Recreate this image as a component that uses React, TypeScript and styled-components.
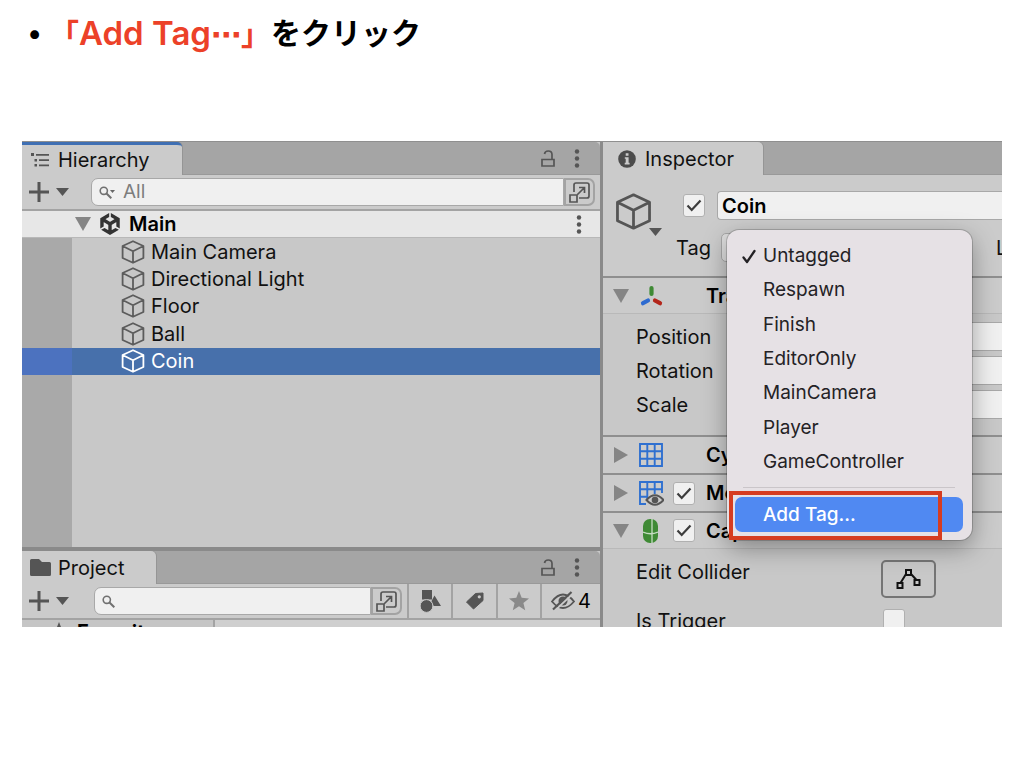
import React from "react";
import styled, { createGlobalStyle } from "styled-components";
import { SiUnity } from "react-icons/si";

const GlobalStyle = createGlobalStyle`
  *, *::before, *::after { box-sizing: border-box; }
  body {
    margin: 0;
    background: #fff;
    color: #111;
    font-family: Inter, "Noto Sans CJK JP", sans-serif;
    font-size: 20px;
    line-height: 24px;
  }
  button, input, select { font: inherit; color: inherit; margin: 0; padding: 0; }
  button { background: none; border: 0; display: flex; align-items: center; justify-content: center; }
  ul { list-style: none; margin: 0; padding: 0; }
  h1, h2, h3 { margin: 0; font: inherit; }
  svg { display: block; flex: none; }
`;

const Slide = styled.main`
  display: flex;
  flex-direction: column;
  gap: 84px;
  padding: 9px 22px 40px;
`;

const Heading = styled.h1`
  && {
    display: flex;
    align-items: center;
    height: 48px;
    padding-left: 6px;
    font-size: 30px;
    line-height: 48px;
    font-weight: 700;
    color: #000;
    white-space: nowrap;
  }
`;

const Bullet = styled.span`
  width: 21px;
  font-size: 28px;
`;

const Accent = styled.span`
  color: #ec4128;
  font-family: "Noto Sans CJK JP", sans-serif;
`;

const Latin = styled.span`
  font-family: Inter, sans-serif;
  font-size: 33px;
  font-weight: 600;
`;

const Dots = styled.span`
  font-family: "DejaVu Sans", sans-serif;
`;

const Editor = styled.section`
  display: grid;
  grid-template-columns: 578fr 399fr;
  gap: 3px;
  height: 486px;
  overflow: hidden;
  background: #8a8a8a;
  border-top: 1px solid #8f8f8f;
`;

const Column = styled.div`
  display: flex;
  flex-direction: column;
  gap: 4px;
  min-width: 0;
`;

const Panel = styled.section<{ $grow?: boolean }>`
  display: flex;
  flex-direction: column;
  flex: ${(p) => (p.$grow ? "1 1 0" : "none")};
  min-width: 0;
  min-height: 0;
  background: #c8c8c8;
`;

const TabBar = styled.header<{ $square?: boolean }>`
  display: flex;
  flex: none;
  height: 33px;
  background: #a5a5a5;
  border-radius: ${(p) => (p.$square ? "0" : "0 5px 0 0")};
  box-shadow: inset 0 -1px #999;
`;

const Tab = styled.button<{ $width: number; $indent?: number; $focused?: boolean }>`
  && {
    justify-content: flex-start;
    gap: 8px;
    width: ${(p) => p.$width}px;
    padding-left: ${(p) => p.$indent ?? 8}px;
    background: #cbcbcb;
    border-top: ${(p) => (p.$focused ? "3px solid #3f6fb3" : "0")};
    border-radius: 0 5px 0 0;
    box-shadow: 1px 0 #959595;
  }
`;

const TabIcon = styled.span`
  display: flex;
  justify-content: center;
  width: 20px;
`;

const TabTools = styled.div`
  display: flex;
  align-items: center;
  gap: 19px;
  margin-left: auto;
  padding-right: 20px;
`;

const Toolbar = styled.div`
  display: flex;
  flex: none;
  align-items: center;
  height: 36px;
  background: #cbcbcb;
  border-bottom: 2px solid #a3a3a3;
`;

const AddButton = styled.button`
  && {
    gap: 7px;
    width: 54px;
  }
`;

const Search = styled.label<{ $indent: number }>`
  display: flex;
  flex: 1;
  align-items: center;
  gap: 6px;
  min-width: 0;
  height: 28px;
  margin-left: ${(p) => p.$indent}px;
  padding-left: 7px;
  background: #f0f0f0;
  border: 1px solid #a8a8a8;
  border-radius: 7px 0 0 7px;
`;

const SearchInput = styled.input`
  && {
    flex: 1;
    min-width: 0;
    width: 0;
    border: 0;
    background: none;
    font-size: 19px;
  }
  &::placeholder { color: #7d7d7d; opacity: 1; }
`;

const ExpandButton = styled.button`
  && {
    width: 31px;
    height: 28px;
    margin-right: 5px;
    border: 2px solid #a3a3a3;
    border-radius: 0 7px 7px 0;
  }
`;

const ToolButton = styled.button<{ $width: number }>`
  && {
    gap: 3px;
    width: ${(p) => p.$width}px;
    height: 34px;
    border-left: 2px solid #a3a3a3;
    color: #000;
  }
`;

const SceneRow = styled.div`
  display: flex;
  flex: none;
  align-items: center;
  gap: 8px;
  height: 27px;
  padding: 0 18px 0 53px;
  background: #e7e7e7;
  border-bottom: 1px solid #b8b8b8;
  font-weight: 600;
  color: #000;
`;

const Spacer = styled.span`
  flex: 1;
`;

const TreeArea = styled.div`
  flex: 1;
  background: linear-gradient(to right, #a9a9a9 50px, transparent 50px);
`;

const Tree = styled.ul`
  display: grid;
  grid-auto-rows: 1fr;
  height: 137px;
`;

const TreeItem = styled.li<{ $selected?: boolean }>`
  display: flex;
  align-items: center;
  gap: 6px;
  padding-left: 99px;
  color: ${(p) => (p.$selected ? "#fff" : "#111")};
  background: ${(p) => (p.$selected ? "linear-gradient(to right, #4c72bf 50px, #4770ab 50px)" : "none")};
  svg { color: ${(p) => (p.$selected ? "#fff" : "#5c5c5c")}; }
`;

const Assets = styled.div`
  display: grid;
  grid-template-columns: 193px 1fr;
  height: 7px;
  overflow: hidden;
  background: #cfcfcf;
`;

const Favorites = styled.div`
  display: flex;
  align-items: center;
  gap: 8px;
  height: 24px;
  padding-left: 27px;
  background: #c5c5c5;
  border-right: 2px solid #a3a3a3;
  font-weight: 700;
  color: #000;
`;

const ObjectHeader = styled.div`
  display: flex;
  flex: none;
  height: 103px;
  padding: 16px 0 0 12px;
  background: #cbcbcb;
  border-bottom: 2px solid #8f8f8f;
`;

const ObjectIcon = styled.button`
  && {
    flex: none;
    position: relative;
    align-items: flex-start;
    justify-content: flex-start;
    width: 61px;
    padding-top: 2px;
    color: #555;
  }
  svg + svg { position: absolute; left: 34px; top: 37px; }
`;

const ObjectFields = styled.div`
  display: flex;
  flex: 1;
  flex-direction: column;
  gap: 13px;
  min-width: 0;
`;

const NameRow = styled.div`
  display: flex;
  align-items: center;
  gap: 12px;
  height: 29px;
  padding-left: 7px;
`;

const TickBox = styled.span`
  position: relative;
  display: flex;
  flex: none;
  width: 22px;
  height: 23px;
  input {
    appearance: none;
    width: 100%;
    height: 100%;
    background: #f0f0f0;
    border: 1px solid #b0b0b0;
    border-radius: 3px;
  }
  svg { position: absolute; left: 3px; top: 4px; pointer-events: none; display: none; }
  input:checked + svg { display: block; }
`;

const Field = styled.input<{ $strong?: boolean }>`
  && {
    flex: 1;
    width: 0;
    min-width: 0;
    height: 29px;
    padding-left: 4px;
    background: #f0f0f0;
    border: 1px solid #a8a8a8;
    border-right: 0;
    border-radius: 4px 0 0 4px;
    font-weight: ${(p) => (p.$strong ? 600 : 400)};
    color: #000;
  }
`;

const TagRow = styled.div`
  display: flex;
  align-items: center;
  height: 29px;
  white-space: nowrap;
`;

const TagLabel = styled.label`
  flex: none;
  width: 45px;
`;

const TagField = styled.div`
  position: relative;
  flex: none;
  width: 264px;
  height: 29px;
  margin-right: 11px;
`;

const TagSelect = styled.select`
  && {
    appearance: none;
    width: 240px;
    height: 29px;
    background: #dfdfdf;
    border: 1px solid #a8a8a8;
    border-radius: 5px;
  }
`;

const Menu = styled.div`
  position: absolute;
  z-index: 2;
  left: 6px;
  top: -3px;
  width: 245px;
  padding: 9px 9px 8px 8px;
  background: #e6e1e5;
  border-radius: 12px;
  box-shadow: 0 0 0 1px rgba(0, 0, 0, 0.18), 0 8px 24px rgba(0, 0, 0, 0.35);
`;

const MenuGroup = styled.div`
  display: grid;
  grid-auto-rows: 1fr;
  height: 240px;
`;

const MenuItem = styled.button<{ $active?: boolean }>`
  && {
    justify-content: flex-start;
    width: 100%;
    height: ${(p) => (p.$active ? "35px" : "auto")};
    border-radius: 7px;
    background: ${(p) => (p.$active ? "#5089f2" : "none")};
    color: ${(p) => (p.$active ? "#fff" : "#242225")};
    font-size: 19px;
    font-weight: ${(p) => (p.$active ? 500 : 400)};
  }
`;

const MenuMark = styled.span`
  display: flex;
  width: 28px;
  padding-left: 7px;
`;

const MenuRule = styled.hr`
  height: 1px;
  margin: 8px 8px 9px;
  border: 0;
  background: #cac5c9;
`;

const Callout = styled.span`
  position: absolute;
  left: 2px;
  bottom: 0;
  width: 213px;
  height: 49px;
  border: 4px solid #d63c20;
  pointer-events: none;
`;

const ComponentHeader = styled.header<{ $open?: boolean }>`
  display: flex;
  flex: none;
  align-items: center;
  height: ${(p) => (p.$open ? 36 : 38)}px;
  padding-left: 10px;
  background: #cbcbcb;
  border-bottom: ${(p) => (p.$open ? "1px solid #b9b9b9" : "2px solid #8f8f8f")};
  font-weight: 600;
  color: #000;
  white-space: nowrap;
`;

const Slot = styled.span<{ $width: number }>`
  display: flex;
  flex: none;
  width: ${(p) => p.$width}px;
`;

const Properties = styled.div`
  display: flex;
  flex: none;
  flex-direction: column;
  gap: 5px;
  height: 123px;
  padding: 8px 0 0 33px;
  border-bottom: 2px solid #8f8f8f;
`;

const PropertyRow = styled.label`
  display: flex;
  align-items: center;
  height: 29px;
  > span { width: 130px; }
`;

const ColliderBody = styled.div`
  display: flex;
  flex: none;
  flex-direction: column;
  gap: 11px;
  padding: 11px 0 0 33px;
`;

const ColliderRow = styled.div`
  display: flex;
  align-items: flex-start;
  > label { width: 245px; }
`;

const EditButton = styled.button`
  && {
    width: 55px;
    height: 38px;
    border: 2px solid #757575;
    border-radius: 5px;
  }
`;

const TriggerSlot = styled.span`
  padding-left: 2px;
`;

const Cube = ({ size = 24, weight = 1.8 }: { size?: number; weight?: number }) => (
  <svg width={size} height={size} viewBox="0 0 24 24" fill="none" stroke="currentColor" strokeWidth={weight} strokeLinejoin="round">
    <path d="M12 1.2 22.4 6v12L12 22.8 1.6 18V6zM1.6 6 12 11.2 22.4 6M12 11.2v11.6" />
  </svg>
);

const Triangle = ({ down }: { down?: boolean }) => (
  <svg width="16" height="16" viewBox="0 0 16 16" fill="#858585">
    <path d={down ? "M0 1h16L8 15z" : "M1 0v16l14-8z"} />
  </svg>
);

const SmallArrow = () => (
  <svg width="13" height="8" viewBox="0 0 13 8" fill="#555"><path d="M0 0h13L6.500 8z" /></svg>
);

const Plus = () => (
  <svg width="20" height="20" viewBox="0 0 20 20" stroke="#555" strokeWidth="3"><path d="M10 0v20M0 10h20" /></svg>
);

const Lock = () => (
  <svg width="14" height="18" viewBox="0 0 14 18" fill="none" stroke="#555" strokeWidth="1.7">
    <path d="M1 9.500h12V16H1zM11 9V4.500Q11 1 7.200 1 4 1 3.500 4" />
  </svg>
);

const Kebab = () => (
  <svg width="6" height="19" viewBox="0 0 6 19" fill="#555">
    <circle cx="3" cy="2.500" r="2.200" /><circle cx="3" cy="9.500" r="2.200" /><circle cx="3" cy="16.500" r="2.200" />
  </svg>
);

const Magnifier = ({ arrow }: { arrow?: boolean }) => (
  <svg width={arrow ? 18 : 13} height="13" viewBox={arrow ? "0 0 18 13" : "0 0 13 13"} fill="none" stroke="#707070" strokeWidth="1.600">
    <circle cx="4.800" cy="4.800" r="3.600" /><path d="m7.500 7.500 4.800 4.800" strokeWidth="2" />
    {arrow && <path d="M11 4h5l-2.500 3z" fill="#666" stroke="none" />}
  </svg>
);

const Expand = () => (
  <svg width="21" height="21" viewBox="0 0 21 21" fill="none" stroke="#555" strokeWidth="1.700">
    <path d="M5 10V3q0-2 2-2h11q2 0 2 2v11q0 2-2 2h-8M1 13h7v7H1zM8.500 12.500 15 6M10 5.500h5.500V11" />
  </svg>
);

const ListIcon = () => (
  <svg width="18" height="14" viewBox="0 0 18 14" fill="#555">
    <path d="M0 0h3v3H0zM5 1h13v1.800H5zM3.500 6h2.500v2.500H3.500zM8 6.300h10v1.800H8zM3.500 11h2.500v2.500H3.500zM8 11.500h10v1.800H8z" />
  </svg>
);

const FolderIcon = () => (
  <svg width="21" height="17" viewBox="0 0 21 17" fill="#555">
    <path d="M0 1.500Q0 0 1.500 0H9l3 3h7.500Q21 3 21 4.500v11q0 1.500-1.500 1.500h-18Q0 17 0 15.500z" />
  </svg>
);

const InfoIcon = () => (
  <svg width="18" height="18" viewBox="0 0 18 18">
    <circle cx="9" cy="9" r="8.800" fill="#4c4c4c" />
    <path d="M7.700 3.200h2.800v2.500H7.700zM6.800 7.200h3.800v5.600h1v1.600H6.700v-1.600h1V8.800h-.9z" fill="#cbcbcb" />
  </svg>
);

const Check = () => (
  <svg width="16" height="15" viewBox="0 0 16 15" fill="none" stroke="#3c3c3c" strokeWidth="2.200"><path d="m1.500 7.500 4.200 4.500L14.500 2.500" /></svg>
);

const MenuCheck = () => (
  <svg width="14" height="15" viewBox="0 0 14 15" fill="none" stroke="#242225" strokeWidth="2.300" strokeLinecap="round" strokeLinejoin="round">
    <path d="m1.500 8.500 3.500 4.500 7.500-11" />
  </svg>
);

const TransformIcon = () => (
  <svg width="23" height="22" viewBox="0 0 23 22" strokeWidth="4.200" strokeLinecap="round">
    <path d="M11.500 3v6" stroke="#3f8a35" /><path d="m8 15.500-5 2.700" stroke="#2e6bd0" /><path d="m15 15.500 5 2.700" stroke="#b3261b" />
  </svg>
);

const GridIcon = ({ eye }: { eye?: boolean }) => (
  <svg width="25" height="25" viewBox="0 0 25 25" fill="none">
    <path
      d={eye ? "M23 12V1H1v22h6M1 8.300h22M1 15.700h8M8.300 1v17M15.700 1v12" : "M1 1h22v22H1zM1 8.300h22M1 15.700h22M8.300 1v22M15.700 1v22"}
      stroke="#2f70d0"
      strokeWidth="1.900"
    />
    {eye && (
      <g>
        <path d="M7.500 19q8.500-9.500 17 0-8.500 9.500-17 0z" fill="#cbcbcb" stroke="#555" strokeWidth="2" />
        <circle cx="16" cy="19" r="3.300" fill="#555" />
      </g>
    )}
  </svg>
);

const CapsuleIcon = () => (
  <svg width="15" height="24" viewBox="0 0 15 24">
    <rect width="15" height="24" rx="7" fill="#3f8a35" />
    <path d="M9 0v24M0 13q7.500 3.500 15 0" fill="none" stroke="#c5dcc2" strokeWidth="1.300" />
  </svg>
);

const ShapesIcon = () => (
  <svg width="21" height="23" viewBox="0 0 21 23" fill="#555">
    <path d="M2 0h10v9.500H2zM14.500 5.500 21 16h-7.500l-2-5z" /><circle cx="6.500" cy="16" r="6.400" stroke="#cbcbcb" strokeWidth="1" />
  </svg>
);

const TagIcon = () => (
  <svg width="18" height="18" viewBox="0 0 18 18">
    <path d="M9.500 1.500 17 1v7.500L7.500 17 .500 10z" fill="#555" stroke="#555" strokeLinejoin="round" /><circle cx="13.300" cy="4.800" r="1.600" fill="#cbcbcb" />
  </svg>
);

const Star = ({ color = "#8a8a8a" }: { color?: string }) => (
  <svg width="20" height="20" viewBox="0 0 20 20" fill={color}>
    <path d="m10 0 2.700 6.800 7.300.6-5.600 4.700 1.800 7.200-6.200-4-6.200 4 1.800-7.200L0 7.400l7.300-.6z" />
  </svg>
);

const HiddenEye = () => (
  <svg width="24" height="20" viewBox="0 0 24 20" fill="none" stroke="#555" strokeWidth="1.800">
    <path d="M1 10.500q11-14 22 0-11 13-22 0z" /><circle cx="12" cy="10" r="4.500" fill="#555" stroke="none" />
    <path d="M4 19.500 22 2.500" stroke="#cbcbcb" /><path d="M2 18.500 20.500 1" strokeWidth="2.200" />
  </svg>
);

const ColliderIcon = () => (
  <svg width="25" height="22" viewBox="0 0 25 22" fill="none" stroke="#111" strokeWidth="2">
    <path d="M1.500 15h5v5h-5zM10 2h5v5h-5zM18.500 12h5v5h-5zM4.500 15 10 6M15 6l5.500 6" />
  </svg>
);

const Tick = ({ id, label, checked }: { id: string; label: string; checked?: boolean }) => (
  <TickBox>
    <input id={id} type="checkbox" aria-label={label} defaultChecked={checked} />
    <Check />
  </TickBox>
);

const PanelTools = () => (
  <TabTools>
    <button aria-label="Lock"><Lock /></button>
    <button aria-label="Panel menu"><Kebab /></button>
  </TabTools>
);

const objects = ["Main Camera", "Directional Light", "Floor", "Ball", "Coin"];
const tags = ["Untagged", "Respawn", "Finish", "EditorOnly", "MainCamera", "Player", "GameController"];

const Hierarchy = () => (
  <Panel $grow>
    <TabBar>
      <Tab $width={160} $focused><TabIcon><ListIcon /></TabIcon>Hierarchy</Tab>
      <PanelTools />
    </TabBar>
    <Toolbar>
      <AddButton aria-label="Create object"><Plus /><SmallArrow /></AddButton>
      <Search $indent={15}>
        <Magnifier arrow />
        <SearchInput type="text" aria-label="Search hierarchy" placeholder="All" />
      </Search>
      <ExpandButton aria-label="Open search"><Expand /></ExpandButton>
    </Toolbar>
    <SceneRow>
      <Triangle down />
      <SiUnity size={22} color="#333" />
      Main
      <Spacer />
      <button aria-label="Scene menu"><Kebab /></button>
    </SceneRow>
    <TreeArea>
      <Tree>
        {objects.map((name) => (
          <TreeItem key={name} $selected={name === "Coin"}><Cube />{name}</TreeItem>
        ))}
      </Tree>
    </TreeArea>
  </Panel>
);

const Project = () => (
  <Panel>
    <TabBar>
      <Tab $width={134}><TabIcon><FolderIcon /></TabIcon>Project</Tab>
      <PanelTools />
    </TabBar>
    <Toolbar>
      <AddButton aria-label="Create asset"><Plus /><SmallArrow /></AddButton>
      <Search $indent={18}>
        <Magnifier />
        <SearchInput type="text" aria-label="Search project" />
      </Search>
      <ExpandButton aria-label="Open search"><Expand /></ExpandButton>
      <ToolButton $width={44} aria-label="Filter by type"><ShapesIcon /></ToolButton>
      <ToolButton $width={45} aria-label="Filter by label"><TagIcon /></ToolButton>
      <ToolButton $width={44} aria-label="Save search"><Star /></ToolButton>
      <ToolButton $width={60} aria-label="Hidden packages"><HiddenEye />4</ToolButton>
    </Toolbar>
    <Assets>
      <Favorites><Star color="#555" />Favorites</Favorites>
    </Assets>
  </Panel>
);

const TagMenu = () => (
  <Menu role="menu">
    <MenuGroup>
      {tags.map((tag, i) => (
        <MenuItem key={tag} role="menuitem"><MenuMark>{i === 0 && <MenuCheck />}</MenuMark>{tag}</MenuItem>
      ))}
    </MenuGroup>
    <MenuRule />
    <MenuItem role="menuitem" $active><MenuMark />Add Tag...</MenuItem>
    <Callout />
  </Menu>
);

const Inspector = () => (
  <Panel $grow>
    <TabBar $square>
      <Tab $width={160} $indent={14}><TabIcon><InfoIcon /></TabIcon>Inspector</Tab>
    </TabBar>
    <ObjectHeader>
      <ObjectIcon aria-label="Choose icon"><Cube size={37} weight={1.8} /><SmallArrow /></ObjectIcon>
      <ObjectFields>
        <NameRow>
          <Tick id="active" label="Active" checked />
          <Field $strong type="text" aria-label="Name" defaultValue="Coin" />
        </NameRow>
        <TagRow>
          <TagLabel htmlFor="tag">Tag</TagLabel>
          <TagField>
            <TagSelect id="tag" />
            <TagMenu />
          </TagField>
          <span>Layer</span>
        </TagRow>
      </ObjectFields>
    </ObjectHeader>
    <ComponentHeader $open>
      <Slot $width={27}><Triangle down /></Slot>
      <Slot $width={66}><TransformIcon /></Slot>
      Transform
    </ComponentHeader>
    <Properties>
      {["Position", "Rotation", "Scale"].map((name) => (
        <PropertyRow key={name}><span>{name}</span><Field type="text" /></PropertyRow>
      ))}
    </Properties>
    <ComponentHeader>
      <Slot $width={26}><Triangle /></Slot>
      <Slot $width={67}><GridIcon /></Slot>
      Cylinder (Mesh Filter)
    </ComponentHeader>
    <ComponentHeader>
      <Slot $width={26}><Triangle /></Slot>
      <Slot $width={34}><GridIcon eye /></Slot>
      <Slot $width={33}><Tick id="renderer" label="Mesh Renderer" checked /></Slot>
      Mesh Renderer
    </ComponentHeader>
    <ComponentHeader $open>
      <Slot $width={30}><Triangle down /></Slot>
      <Slot $width={30}><CapsuleIcon /></Slot>
      <Slot $width={33}><Tick id="collider" label="Capsule Collider" checked /></Slot>
      Capsule Collider
    </ComponentHeader>
    <ColliderBody>
      <ColliderRow>
        <label htmlFor="edit-collider">Edit Collider</label>
        <EditButton id="edit-collider" aria-label="Edit Collider"><ColliderIcon /></EditButton>
      </ColliderRow>
      <ColliderRow>
        <label htmlFor="trigger">Is Trigger</label>
        <TriggerSlot><Tick id="trigger" label="Is Trigger" /></TriggerSlot>
      </ColliderRow>
    </ColliderBody>
  </Panel>
);

export default function App() {
  return (
    <>
      <GlobalStyle />
      <Slide>
        <Heading>
          <Bullet>•</Bullet>
          <Accent>「<Latin>Add Tag</Latin><Dots>⋯</Dots>」</Accent>
          <span>をクリック</span>
        </Heading>
        <Editor>
          <Column>
            <Hierarchy />
            <Project />
          </Column>
          <Column>
            <Inspector />
          </Column>
        </Editor>
      </Slide>
    </>
  );
}
